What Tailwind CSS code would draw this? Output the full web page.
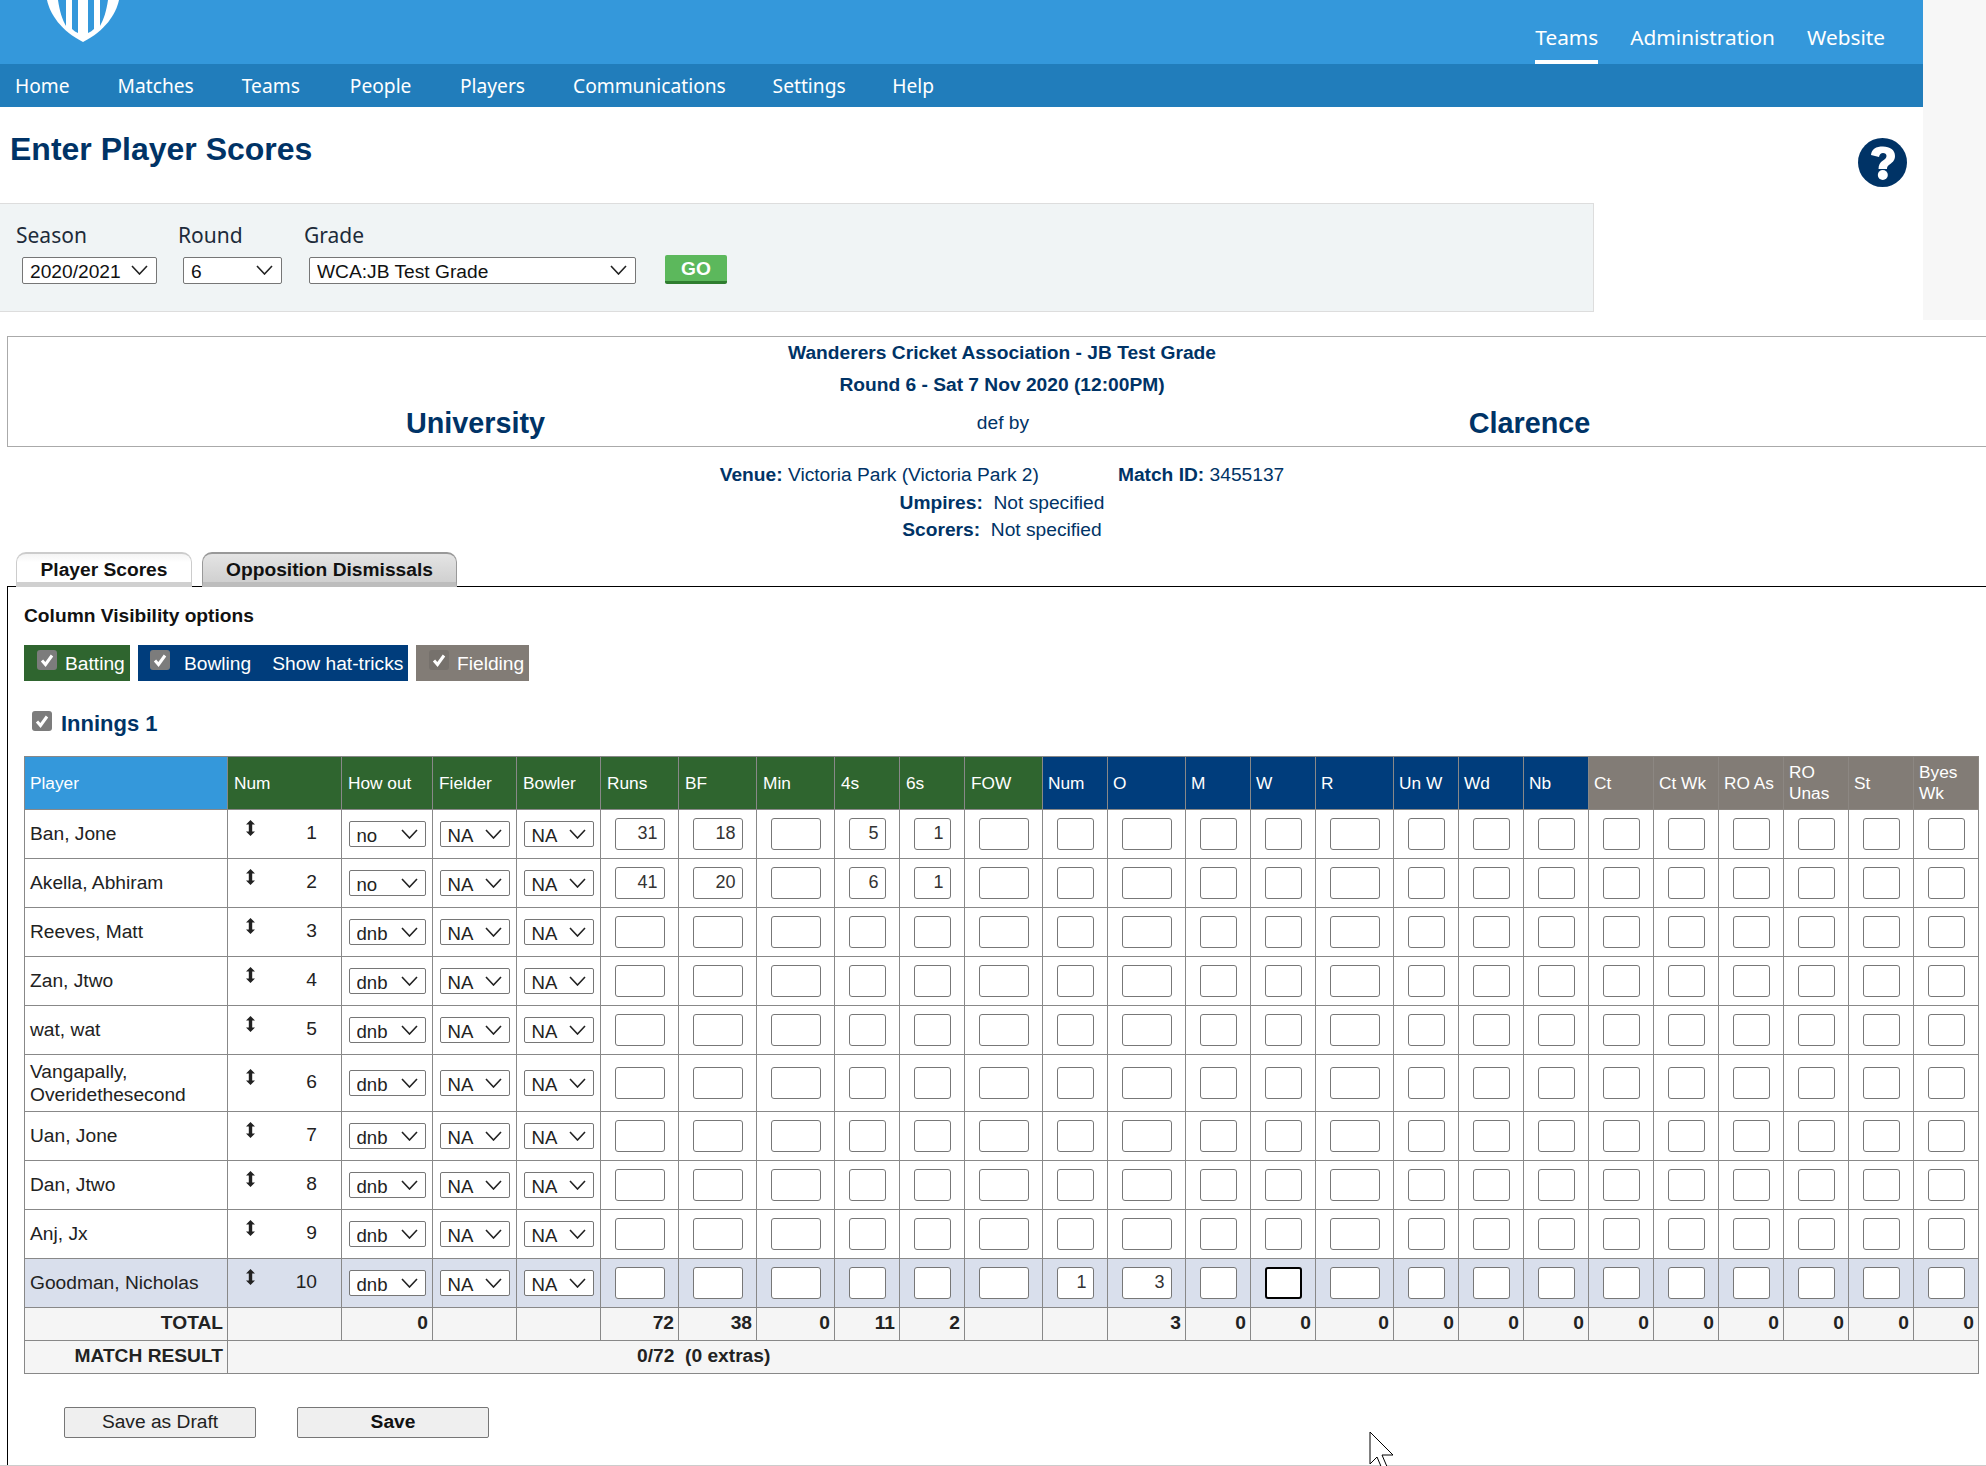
<!DOCTYPE html>
<html lang="en">
<head>
  <meta charset="UTF-8">
  <title>Enter Player Scores</title>
  <script src="https://cdn.jsdelivr.net/npm/@tailwindcss/browser@4"></script>
</head>
<body class="relative w-[1986px] h-[1466px] overflow-hidden bg-white font-['Liberation_Sans',Arial,sans-serif] text-[19.2px] text-[#222]">

  <!-- Top of page -->
  <div class="flex h-[320px]">
    <div class="w-[1923px]">
      <div class="relative flex justify-end h-[64px] bg-[#3498db] pr-[38px] gap-[32px] font-['Noto_Sans',sans-serif] text-[20.8px] text-white">
        <svg class="absolute left-[47px] top-0" width="72" height="42" viewBox="0 0 72 42">
          <path d="M0 0 C3 14 14 31 36 42 C58 31 69 14 72 0 Z" fill="#fff"/>
          <path d="M11 0 H19 V26 C15.5 20 12.5 11 11 0 Z M25 0 H31 V33 C29 32 27 31 25 29 Z M41 0 H47 V29 C45 31 43 32 41 33 Z M53 0 H61 C59.5 11 56.5 20 53 26 Z" fill="#3498db"/>
        </svg>
        <a class="h-[64px] leading-[74px] border-b-4 border-white">Teams</a>
        <a class="leading-[74px]">Administration</a>
        <a class="leading-[74px]">Website</a>
      </div>
      <div class="flex h-[43px] bg-[#217dbb] pl-[15px] pt-[2px] gap-[48px] items-center font-['Noto_Sans',sans-serif] text-[19.2px] text-white">
        <a>Home</a><a>Matches</a><a>Teams</a><a class="ml-[2px]">People</a><a class="ml-[0.5px]">Players</a><a>Communications</a><a class="-ml-[1.2px]">Settings</a><a class="-ml-[1.3px]">Help</a>
      </div>
      <div class="flex justify-between h-[96px] pl-[10px] pr-[16px]">
        <h1 class="pt-[24px] text-[32px] leading-[36px] font-bold text-[#003366]">Enter Player Scores</h1>
        <svg class="mt-[31px]" width="49" height="49" viewBox="0 0 49 49">
          <circle cx="24.5" cy="24.5" r="24.5" fill="#003366"/>
          <path d="M13 17 C13.5 11 18 8.5 25 8.5 C32 8.5 37 12 37 18 C37 23 33.5 25 31 27 C29.5 28 29 29 29 31 H20.5 C20.5 27 22 24.5 25 22.5 C27 21 28.5 20 28.5 18 C28.5 16 27 15 25 15 C23 15 21.5 16.5 21 19 Z" fill="#fff"/>
          <circle cx="24.8" cy="37" r="5" fill="#fff"/>
        </svg>
      </div>
      <div class="flex w-[1594px] h-[109px] pl-[16px] pt-[18px] border border-l-0 border-[#ddd] bg-[#f0f4f5] text-[#1d2b3a]">
        <div class="w-[162px]">
          <div class="font-['Noto_Sans',sans-serif] text-[21px] leading-[26px]">Season</div>
          <span class="relative block mt-[9px] ml-[6px] w-[135px]">
            <select class="appearance-none block w-full h-[27px] pl-[7px] pb-[2px] border border-[#767676] rounded-[2px] bg-white text-[#111]"><option>2020/2021</option></select>
            <svg class="absolute right-[9px] top-[8px]" width="17" height="10" viewBox="0 0 17 10"><path d="M1 1 L8.5 9 L16 1" fill="none" stroke="#222" stroke-width="1.6"/></svg>
          </span>
        </div>
        <div class="w-[126px]">
          <div class="font-['Noto_Sans',sans-serif] text-[21px] leading-[26px]">Round</div>
          <span class="relative block mt-[9px] ml-[5px] w-[99px]">
            <select class="appearance-none block w-full h-[27px] pl-[7px] pb-[2px] border border-[#767676] rounded-[2px] bg-white text-[#111]"><option>6</option></select>
            <svg class="absolute right-[9px] top-[8px]" width="17" height="10" viewBox="0 0 17 10"><path d="M1 1 L8.5 9 L16 1" fill="none" stroke="#222" stroke-width="1.6"/></svg>
          </span>
        </div>
        <div class="w-[361px]">
          <div class="font-['Noto_Sans',sans-serif] text-[21px] leading-[26px]">Grade</div>
          <span class="relative block mt-[9px] ml-[5px] w-[327px]">
            <select class="appearance-none block w-full h-[27px] pl-[7px] pb-[2px] border border-[#767676] rounded-[2px] bg-white text-[#111]"><option>WCA:JB Test Grade</option></select>
            <svg class="absolute right-[9px] top-[8px]" width="17" height="10" viewBox="0 0 17 10"><path d="M1 1 L8.5 9 L16 1" fill="none" stroke="#222" stroke-width="1.6"/></svg>
          </span>
        </div>
        <button class="mt-[33px] w-[62px] h-[29px] pt-[1px] rounded-[2px] bg-[#5cb85c] border-b-[3px] border-[#2f7d2f] font-bold text-[19.2px] leading-none text-white">GO</button>
      </div>
    </div>
    <div class="flex-1 bg-[#f7f7f7]"></div>
  </div>

  <!-- Match header -->
  <div class="w-[2004px] mt-[16px] text-[#003366] text-center">
    <div class="ml-[7px] w-[1990px] h-[111px] border border-[#aaa]">
      <div class="font-bold leading-[32px]">Wanderers Cricket Association - JB Test Grade</div>
      <div class="font-bold leading-[32px]">Round 6 - Sat 7 Nov 2020 (12:00PM)</div>
      <div class="grid grid-cols-[935px_120px_1fr] items-center h-[45px]">
        <div class="text-[28.8px] font-bold">University</div>
        <div>def by</div>
        <div class="text-[28.8px] font-bold">Clarence</div>
      </div>
    </div>
    <div class="mt-[14px] leading-[27.5px]">
      <div><b>Venue:</b> Victoria Park (Victoria Park 2)<b class="ml-[79px]">Match ID:</b> 3455137</div>
      <div><b>Umpires:</b>&nbsp; Not specified</div>
      <div><b>Scorers:</b>&nbsp; Not specified</div>
    </div>
  </div>

  <!-- Tabs -->
  <div class="relative z-10 flex gap-[10px] ml-[16px] mt-[8px] h-[35px] text-[19.2px] font-bold text-[#111]">
    <a class="flex justify-center items-center w-[176px] pt-[6px] rounded-t-[10px] border-x border-t-2 border-[#ccc] border-b-[5px] border-b-[#d0d0d0] bg-linear-to-b from-[#f4f4f4] to-white to-30%">Player Scores</a>
    <a class="flex justify-center items-center w-[255px] pt-[6px] rounded-t-[10px] border-x border-t-2 border-[#999] border-b-[5px] border-b-[#bdbdbd] bg-linear-to-b from-[#e4e4e4] to-[#d0d0d0]">Opposition Dismissals</a>
  </div>

  <!-- Player scores panel -->
  <div class="ml-[7px] -mt-[1px] h-[879px] w-[2000px] pl-[16px] border-l border-t border-black border-b-0">
    <div class="pt-[17px] text-[19.2px] leading-[24px] font-bold text-[#111]">Column Visibility options</div>

    <div class="flex gap-[8px] mt-[17px] h-[36px] text-white text-[19.2px]">
      <label class="flex w-[106px] bg-[#2f652f] pl-[13px]">
        <span class="flex justify-center items-center mt-[5px] w-[20px] h-[20px] rounded-[3px] bg-[#7c7c7c]"><svg width="14" height="14" viewBox="0 0 14 14"><path d="M2 7.5 L5.5 11.5 L12 2.5" fill="none" stroke="#fff" stroke-width="3"/></svg></span>
        <span class="ml-[8px] leading-[38px]">Batting</span>
      </label>
      <label class="flex w-[270px] bg-[#003d7c] pl-[12px]">
        <span class="flex justify-center items-center mt-[5px] w-[20px] h-[20px] rounded-[3px] bg-[#7c7c7c]"><svg width="14" height="14" viewBox="0 0 14 14"><path d="M2 7.5 L5.5 11.5 L12 2.5" fill="none" stroke="#fff" stroke-width="3"/></svg></span>
        <span class="ml-[14px] leading-[38px]">Bowling</span>
        <span class="ml-[21px] leading-[38px]">Show hat-tricks</span>
      </label>
      <label class="flex w-[113px] bg-[#827c76] pl-[13px]">
        <span class="flex justify-center items-center mt-[5px] w-[20px] h-[20px] rounded-[3px] bg-[#76716c]"><svg width="14" height="14" viewBox="0 0 14 14"><path d="M2 7.5 L5.5 11.5 L12 2.5" fill="none" stroke="#fff" stroke-width="3"/></svg></span>
        <span class="ml-[8px] leading-[38px]">Fielding</span>
      </label>
    </div>

    <div class="flex items-center gap-[9px] ml-[8px] mt-[28px] h-[30px] text-[22px] font-bold text-[#003366]">
      <span class="flex justify-center items-center -mt-[5px] w-[20px] h-[20px] rounded-[3px] bg-[#7c7c7c]"><svg width="14" height="14" viewBox="0 0 14 14"><path d="M2 7.5 L5.5 11.5 L12 2.5" fill="none" stroke="#fff" stroke-width="3"/></svg></span>
      <span>Innings 1</span>
    </div>

    <table class="mt-[17px] w-[1955px] table-fixed border-collapse text-[#222]">
      <colgroup id="cols"></colgroup>
      <thead>
        <tr id="head" class="h-[53px] text-[17.3px] leading-[21px] text-white text-left"></tr>
      </thead>
      <tbody id="rows"></tbody>
      <tfoot class="bg-[#f5f5f5] font-bold">
        <tr id="total" class="h-[33px] text-right"></tr>
        <tr class="h-[33px]">
          <td class="border border-[#888] pr-[4px] text-right">MATCH RESULT</td>
          <td colspan="24" class="border border-[#888] pl-[409px]">0/72&nbsp; (0 extras)</td>
        </tr>
      </tfoot>
    </table>

    <div class="flex gap-[41px] ml-[40px] mt-[33px]">
      <button class="w-[192px] h-[31px] border border-[#767676] rounded-[2px] bg-[#efefef] text-[#222]">Save as Draft</button>
      <button class="w-[192px] h-[31px] border border-[#767676] rounded-[2px] bg-[#efefef] font-bold text-[#111]">Save</button>
    </div>
  </div>
  <div class="absolute left-0 top-[1465px] w-full h-[1px] bg-[#ccc]"></div>

  <!-- mouse pointer -->
  <svg class="absolute left-[1369px] top-[1431px]" width="28" height="40" viewBox="0 0 28 40">
    <path d="M1 1 V33 L8 26 L14 40 L19 38 L13 24 H24 Z" fill="#fff" stroke="#000" stroke-width="1"/>
  </svg>

  <script>
    // widths of the table columns, read off the page
    const widths = [203,114,91,84,84,78,78,78,65,65,78,65,78,65,65,78,65,65,65,65,65,65,65,65,65];
    document.getElementById("cols").innerHTML = widths.map(w => `<col style="width:${w}px">`).join("");

    const green = "border border-[#888] px-[6px] pt-[1px] bg-[#2f652f] font-normal";
    const navy = "border border-[#888] px-[5px] pt-[1px] bg-[#003d7c] font-normal";
    const grey = "border border-[#8c8782] px-[5px] pt-[1px] bg-[#827c76] font-normal";
    const head = [
      ["Player", "border border-[#888] px-[5px] pt-[1px] bg-[#3498db] font-normal"],
      ["Num", green], ["How out", green], ["Fielder", green], ["Bowler", green], ["Runs", green],
      ["BF", green], ["Min", green], ["4s", green], ["6s", green], ["FOW", green],
      ["Num", navy], ["O", navy], ["M", navy], ["W", navy], ["R", navy], ["Un W", navy], ["Wd", navy], ["Nb", navy],
      ["Ct", grey], ["Ct Wk", grey], ["RO As", grey], ["RO Unas", grey], ["St", grey], ["Byes Wk", grey],
    ];
    document.getElementById("head").innerHTML = head.map(([t, c]) => `<th class="${c}">${t}</th>`).join("");

    const players = [
      ["Ban, Jone", "no", {5:"31",6:"18",8:"5",9:"1"}],
      ["Akella, Abhiram", "no", {5:"41",6:"20",8:"6",9:"1"}],
      ["Reeves, Matt", "dnb", {}],
      ["Zan, Jtwo", "dnb", {}],
      ["wat, wat", "dnb", {}],
      ["Vangapally, Overidethesecond", "dnb", {}],
      ["Uan, Jone", "dnb", {}],
      ["Dan, Jtwo", "dnb", {}],
      ["Anj, Jx", "dnb", {}],
      ["Goodman, Nicholas", "dnb", {11:"1",12:"3"}],
    ];
    const td = "border border-[#888] p-0";
    const chevron = `<svg class="absolute right-[8px] top-[8px]" width="17" height="10" viewBox="0 0 17 10"><path d="M1 1 L8.5 9 L16 1" fill="none" stroke="#222" stroke-width="1.6"/></svg>`;
    const sel = "appearance-none block w-full h-[26px] pl-[7px] pb-[2px] border border-[#767676] rounded-[2px] bg-white text-[18.6px]";
    const arrows = `<svg class="mb-[10px]" width="11" height="16" viewBox="0 0 11 16"><path d="M5.5 0 L10 4.5 H7.2 V11.5 H10 L5.5 16 L1 11.5 H3.8 V4.5 H1 Z" fill="#222"/></svg>`;

    document.getElementById("rows").innerHTML = players.map(([name, out, vals], r) => {
      let cells = `<td class="${td} px-[5px] leading-[23px]">${name}</td>`;
      cells += `<td class="${td}"><div class="flex justify-between items-center pl-[17px] pr-[24px]">${arrows}<span>${r + 1}</span></div></td>`;
      cells += `<td class="${td}"><span class="relative block mx-auto w-[77px]"><select class="${sel}"><option>${out}</option></select>${chevron}</span></td>`;
      cells += `<td class="${td}"><span class="relative block mx-auto w-[70px]"><select class="${sel}"><option>NA</option></select>${chevron}</span></td>`;
      cells += `<td class="${td}"><span class="relative block mx-auto w-[70px]"><select class="${sel}"><option>NA</option></select>${chevron}</span></td>`;
      for (let i = 5; i < 25; i++) {
        const ring = r === 9 && i === 14 ? "border-2 border-black" : "border border-[#777]";
        cells += `<td class="${td}"><input value="${vals[i] || ""}" style="width:${widths[i] - 28}px" class="block mx-auto h-[32px] px-[6px] ${ring} rounded-[3px] bg-white text-right text-[18px] text-[#333]"></td>`;
      }
      const rowClass = r === 9 ? "bg-[#d9dfec]" : "bg-white";
      return `<tr class="${r === 5 ? "h-[57px]" : "h-[49px]"} ${rowClass}">${cells}</tr>`;
    }).join("");

    const totals = ["TOTAL","","0","","","72","38","0","11","2","","","3","0","0","0","0","0","0","0","0","0","0","0","0"];
    document.getElementById("total").innerHTML = totals.map(t => `<td class="border border-[#888] pr-[4px]">${t}</td>`).join("");
  </script>
</body>
</html>
